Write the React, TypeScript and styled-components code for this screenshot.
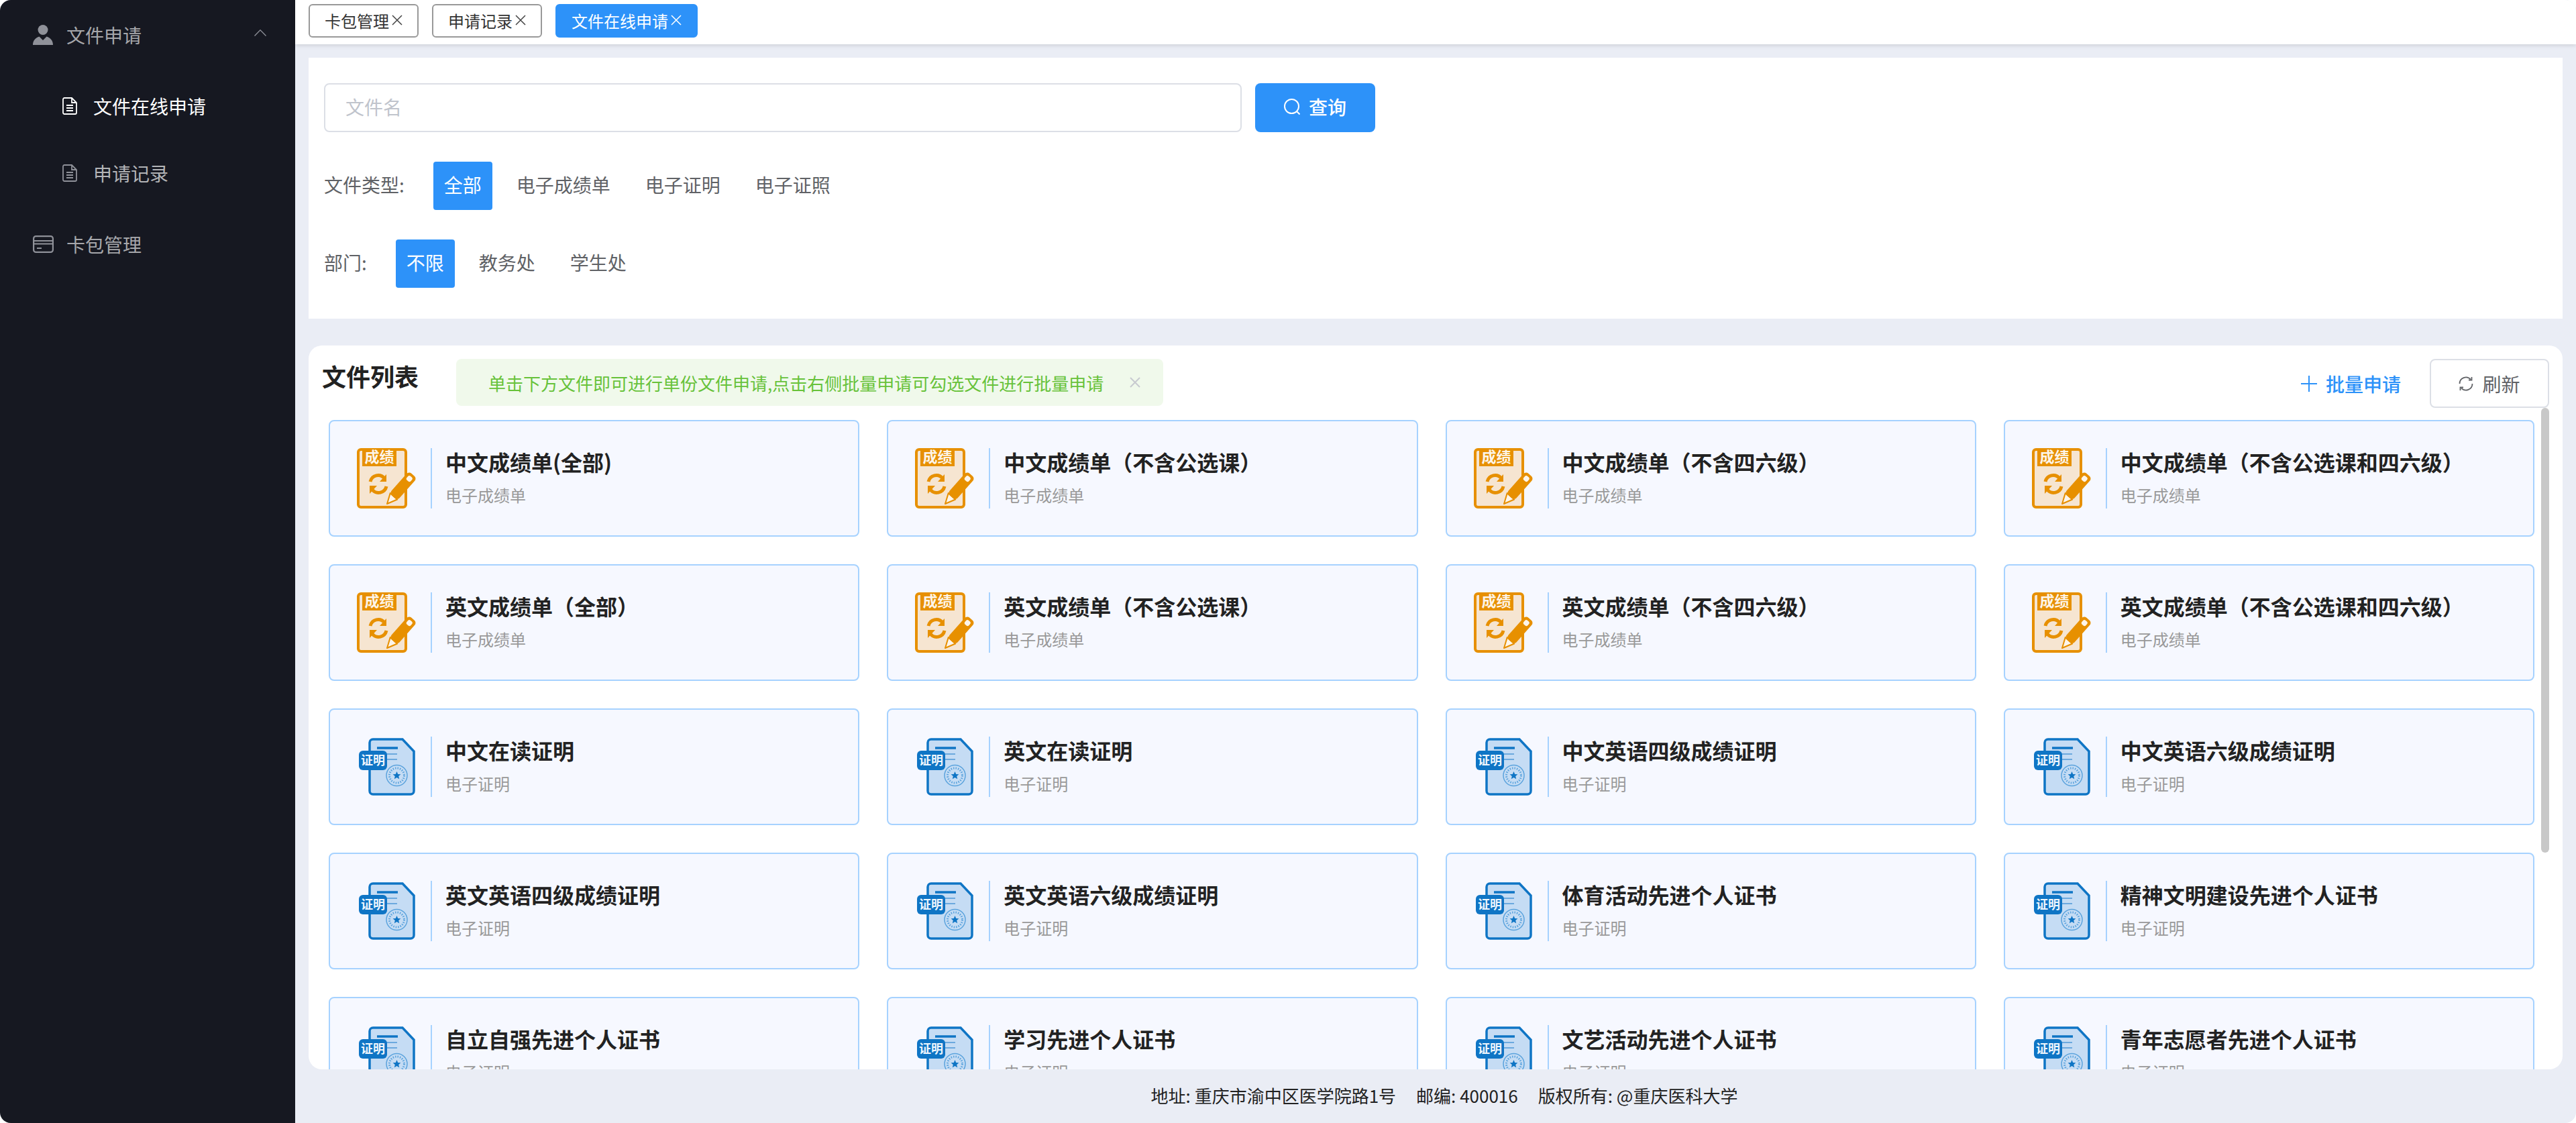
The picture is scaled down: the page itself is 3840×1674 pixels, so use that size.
import React, { FC } from "react";
import styled, { createGlobalStyle } from "styled-components";

const BLUE = "#2d92f9";

const GlobalStyle = createGlobalStyle`
  html, body {
    margin: 0;
    padding: 0;
    background: #fff;
  }
  * {
    box-sizing: border-box;
  }
  body {
    font-family: "Noto Sans CJK SC", "Noto Sans", sans-serif;
  }
`;

interface FileItem {
  title: string;
  kind: "score" | "cert";
}

const toItems = (kind: FileItem["kind"], titles: string[]): FileItem[] =>
  titles.map((title) => ({ title, kind }));

const files: FileItem[] = [
  ...toItems("score", [
    "中文成绩单(全部)",
    "中文成绩单（不含公选课）",
    "中文成绩单（不含四六级）",
    "中文成绩单（不含公选课和四六级）",
    "英文成绩单（全部）",
    "英文成绩单（不含公选课）",
    "英文成绩单（不含四六级）",
    "英文成绩单（不含公选课和四六级）",
  ]),
  ...toItems("cert", [
    "中文在读证明",
    "英文在读证明",
    "中文英语四级成绩证明",
    "中文英语六级成绩证明",
    "英文英语四级成绩证明",
    "英文英语六级成绩证明",
    "体育活动先进个人证书",
    "精神文明建设先进个人证书",
    "自立自强先进个人证书",
    "学习先进个人证书",
    "文艺活动先进个人证书",
    "青年志愿者先进个人证书",
  ]),
];

const ScoreIcon: FC = () => (
  <IconSvg width="90" height="90" viewBox="0 0 90 90" fill="none">
    <rect x="2" y="2" width="71" height="86" rx="4" fill="#f6e5d1" stroke="#e79000" strokeWidth="4" />
    <path d="M8 0H59V27H8Z" fill="#e79000" />
    <text x="33.5" y="21" textAnchor="middle" fontSize="22" fontWeight="700" fill="#fdf5ea">
      成绩
    </text>
    <path d="M20 50a12 12 0 0 1 21-5" stroke="#e79000" strokeWidth="5" />
    <path d="M44 39v11H34Z" fill="#e79000" />
    <path d="M44 57a12 12 0 0 1-21 5" stroke="#e79000" strokeWidth="5" />
    <path d="M19 68V56h11Z" fill="#e79000" />
    <g transform="translate(45 83) rotate(41.7)">
      <path d="M0 0L-7-15H7Z" fill="#fdf5ea" stroke="#e79000" strokeWidth="2" strokeLinejoin="round" />
      <rect x="-8" y="-58" width="16" height="44" rx="5" fill="#e79000" />
      <rect x="-4" y="-54" width="8" height="8" rx="3" fill="#fdf5ea" />
    </g>
  </IconSvg>
);

const CertIcon: FC = () => (
  <IconSvg width="90" height="90" viewBox="0 0 90 90" fill="none">
    <path
      d="M24 4H68L85 22V81a5 5 0 0 1-5 5H24a5 5 0 0 1-5-5V9a5 5 0 0 1 5-5Z"
      fill="#c5dcf4"
      stroke="#0f75c5"
      strokeWidth="3.5"
    />
    <path d="M30 17H61" stroke="#0f75c5" strokeWidth="3.5" />
    <path d="M30 26H60M30 34H60" stroke="#4f98d6" strokeWidth="1.5" />
    <circle cx="59.5" cy="58" r="15.5" stroke="#5ba3dd" strokeWidth="1.5" />
    <circle cx="59.5" cy="58" r="11" stroke="#5ba3dd" strokeWidth="3" strokeDasharray="1.5 2" />
    <path
      d="M59.5 52l1.7 3.9 4.2.4-3.2 2.8 1 4.1-3.7-2.2-3.7 2.2 1-4.1-3.2-2.8 4.2-.4Z"
      fill="#0f75c5"
    />
    <rect x="3" y="21" width="42" height="29" rx="6" fill="#0f75c5" />
    <text x="24" y="42" textAnchor="middle" fontSize="18" fontWeight="700" fill="#eef6fd">
      证明
    </text>
  </IconSvg>
);

const UserIcon: FC = () => (
  <svg width="30" height="30" viewBox="0 0 30 30" fill="#8f9199">
    <circle cx="15" cy="7.5" r="7.5" />
    <path d="M0 30C0 23 4 19.5 9.5 17.5L15 23L20.500 17.500C26 19.500 30 23 30 30Z" />
  </svg>
);

const DocIcon: FC<{ color: string }> = ({ color }) => (
  <svg width="22" height="26" viewBox="0 0 22 26" fill="none" stroke={color} strokeWidth="1.8">
    <path d="M3 1H14L21 8V23a2 2 0 0 1-2 2H3a2 2 0 0 1-2-2V3a2 2 0 0 1 2-2Z" />
    <path d="M14 1V8H21" />
    <path d="M6 12H16M6 16H16M6 20H16" />
  </svg>
);

const WalletIcon: FC = () => (
  <svg width="31" height="26" viewBox="0 0 31 26" fill="none" stroke="#8f9199" strokeWidth="2.2">
    <rect x="1.100" y="1.100" width="28.800" height="23.800" rx="3.500" />
    <path d="M1 8H30M1 12.500H30M6 19H13" />
  </svg>
);

const SearchIcon: FC = () => (
  <svg width="24" height="24" viewBox="0 0 24 24" fill="none" stroke="#fff" strokeWidth="2">
    <circle cx="11.500" cy="11.500" r="10.500" />
    <path d="M19 19L23.500 23.500" />
  </svg>
);

const CrossIcon: FC<{ color: string; weight?: number }> = ({ color, weight = 1.5 }) => (
  <svg width="16" height="16" viewBox="0 0 16 16" fill="none" stroke={color} strokeWidth={weight}>
    <path d="M1 1L15 15M15 1L1 15" />
  </svg>
);

const PlusIcon: FC = () => (
  <svg width="24" height="24" viewBox="0 0 24 24" fill="none" stroke={BLUE} strokeWidth="2">
    <path d="M0 12H24M12 0V24" />
  </svg>
);

const RefreshIcon: FC = () => (
  <svg width="22" height="22" viewBox="0 0 22 22" fill="none" stroke="#606266" strokeWidth="1.800">
    <path d="M1.500 11A9.500 9.500 0 0 1 18 4.500" />
    <path d="M20.500 11A9.500 9.500 0 0 1 4 17.500" />
    <path d="M15 5.500H19.500V1" />
    <path d="M7 16.500H2.500V21" />
  </svg>
);

const ChevronIcon: FC = () => (
  <svg width="18" height="10" viewBox="0 0 18 10" fill="none" stroke="#8f9199" strokeWidth="1.300">
    <path d="M0.500 9.500L9 0.800L17.500 9.500" />
  </svg>
);

const FileCardItem: FC<{ item: FileItem }> = ({ item }) => (
  <FileCard>
    <IconBox>{item.kind === "score" ? <ScoreIcon /> : <CertIcon />}</IconBox>
    <FileText>
      <FileTitle>{item.title}</FileTitle>
      <FileSub>{item.kind === "score" ? "电子成绩单" : "电子证明"}</FileSub>
    </FileText>
  </FileCard>
);

const App: FC = () => {
  return (
    <Shell>
      <GlobalStyle />
      <Sidebar>
        <MenuRow>
          <MenuIcon>
            <UserIcon />
          </MenuIcon>
          文件申请
          <MenuArrow>
            <ChevronIcon />
          </MenuArrow>
        </MenuRow>
        <SubMenu>
          <SubRow $active>
            <DocIcon color="#fff" />
            文件在线申请
          </SubRow>
          <SubRow>
            <DocIcon color="#8f9199" />
            申请记录
          </SubRow>
        </SubMenu>
        <MenuRow>
          <MenuIcon>
            <WalletIcon />
          </MenuIcon>
          卡包管理
        </MenuRow>
      </Sidebar>

      <Column>
        <TabBar>
          <Tab>
            卡包管理
            <CrossIcon color="#444" />
          </Tab>
          <Tab>
            申请记录
            <CrossIcon color="#444" />
          </Tab>
          <Tab $active>
            文件在线申请
            <CrossIcon color="#fff" />
          </Tab>
        </TabBar>

        <Main>
          <SearchCard>
            <SearchRow>
              <SearchInput placeholder="文件名" />
              <SearchButton>
                <SearchIcon />
                查询
              </SearchButton>
            </SearchRow>
            <FilterRow>
              <FilterLabel>文件类型:</FilterLabel>
              <FilterOption $active>全部</FilterOption>
              <FilterOption>电子成绩单</FilterOption>
              <FilterOption>电子证明</FilterOption>
              <FilterOption>电子证照</FilterOption>
            </FilterRow>
            <FilterRow>
              <FilterLabel>部门:</FilterLabel>
              <FilterOption $active>不限</FilterOption>
              <FilterOption>教务处</FilterOption>
              <FilterOption>学生处</FilterOption>
            </FilterRow>
          </SearchCard>

          <ListPanel>
            <ListHeader>
              <ListTitle>文件列表</ListTitle>
              <Notice>
                单击下方文件即可进行单份文件申请,点击右侧批量申请可勾选文件进行批量申请
                <NoticeClose>
                  <CrossIcon color="#c8cad0" weight={2} />
                </NoticeClose>
              </Notice>
              <Actions>
                <BatchButton>
                  <PlusIcon />
                  批量申请
                </BatchButton>
                <RefreshButton>
                  <RefreshIcon />
                  刷新
                </RefreshButton>
              </Actions>
            </ListHeader>
            <ListBody>
              <ScrollArea>
                <FileGrid>
                  {files.map((item) => (
                    <FileCardItem key={item.title} item={item} />
                  ))}
                </FileGrid>
              </ScrollArea>
              <ScrollThumb />
            </ListBody>
          </ListPanel>
        </Main>

        <Footer>
          <span>地址: 重庆市渝中区医学院路1号</span>
          <span>邮编: 400016</span>
          <span>版权所有: @重庆医科大学</span>
        </Footer>
      </Column>
    </Shell>
  );
};

const IconSvg = styled.svg`
  display: block;
  overflow: visible;
`;

const Shell = styled.div`
  display: flex;
  width: 100vw;
  height: 100vh;
  overflow: hidden;
  border-radius: 16px;
  background: #eaedf5;
`;

const Sidebar = styled.aside`
  flex: 0 0 440px;
  padding-top: 2px;
  background: #161821;
`;

const MenuRow = styled.div`
  display: flex;
  align-items: center;
  height: 100px;
  padding-left: 49px;
  padding-right: 43px;
  font-size: 28px;
  color: #a6a7ab;
`;

const MenuIcon = styled.span`
  display: flex;
  width: 50px;
`;

const MenuArrow = styled.span`
  display: flex;
  margin-left: auto;
  margin-top: -6px;
`;

const SubMenu = styled.div`
  padding: 6px 0;
`;

const SubRow = styled.div<{ $active?: boolean }>`
  display: flex;
  align-items: center;
  gap: 24px;
  height: 100px;
  padding-left: 93px;
  font-size: 28px;
  color: ${(p) => (p.$active ? "#fff" : "#b3b4b7")};
`;

const Column = styled.div`
  flex: 1;
  min-width: 0;
  display: flex;
  flex-direction: column;
`;

const TabBar = styled.div`
  flex: 0 0 66px;
  position: relative;
  display: flex;
  gap: 20px;
  padding: 6px 20px 0;
  background: #fff;
  box-shadow: 0 2px 6px rgba(0, 0, 0, 0.12);
`;

const Tab = styled.div<{ $active?: boolean }>`
  display: flex;
  align-items: center;
  gap: 4px;
  height: 50px;
  padding: 0 22px 2px;
  font-size: 24px;
  border-radius: 6px;
  border: 2px solid ${(p) => (p.$active ? BLUE : "#999")};
  background: ${(p) => (p.$active ? BLUE : "#fff")};
  color: ${(p) => (p.$active ? "#fff" : "#333")};
`;

const Main = styled.main`
  flex: 1;
  min-height: 0;
  display: flex;
  flex-direction: column;
  gap: 40px;
  padding: 20px 20px 0;
`;

const SearchCard = styled.section`
  flex: 0 0 389px;
  display: flex;
  flex-direction: column;
  gap: 44px;
  padding: 38px 23px 0;
  background: #fff;
`;

const SearchRow = styled.div`
  display: flex;
  gap: 20px;
`;

const SearchInput = styled.input`
  width: 1368px;
  height: 73px;
  padding: 0 30px 4px;
  font-family: inherit;
  font-size: 28px;
  outline: none;
  border: 2px solid #dcdfe6;
  border-radius: 8px;

  &::placeholder {
    color: #c0c4cc;
  }
`;

const SearchButton = styled.button`
  display: flex;
  align-items: center;
  justify-content: center;
  gap: 13px;
  width: 179px;
  height: 73px;
  padding: 0 0 3px;
  font-family: inherit;
  font-size: 28px;
  font-weight: 500;
  color: #fff;
  border: 0;
  border-radius: 8px;
  background: ${BLUE};
`;

const FilterRow = styled.div`
  display: flex;
  align-items: center;
  gap: 20px;
  height: 72px;
  font-size: 28px;
  color: #606266;
`;

const FilterLabel = styled.span`
  margin-right: 23px;
  padding-bottom: 4px;
`;

const FilterOption = styled.span<{ $active?: boolean }>`
  display: flex;
  align-items: center;
  height: 72px;
  padding: 0 16px 4px;
  border-radius: 4px;
  background: ${(p) => (p.$active ? BLUE : "transparent")};
  color: ${(p) => (p.$active ? "#fff" : "#606266")};
`;

const ListPanel = styled.section`
  flex: 1;
  min-height: 0;
  display: flex;
  flex-direction: column;
  padding: 20px 20px 0;
  border-radius: 20px;
  overflow: hidden;
  background: #fff;
`;

const ListHeader = styled.div`
  flex: 0 0 72px;
  display: flex;
  align-items: flex-start;
`;

const ListTitle = styled.h2`
  width: 200px;
  margin: 0;
  font-size: 36px;
  line-height: 50px;
  font-weight: 700;
  color: #222;
`;

const Notice = styled.div`
  display: flex;
  align-items: center;
  width: 1054px;
  height: 70px;
  padding: 0 34px 0 48px;
  font-size: 26px;
  color: #67c23a;
  border-radius: 8px;
  background: #f0f9eb;
`;

const NoticeClose = styled.span`
  display: flex;
  margin-left: auto;
`;

const Actions = styled.div`
  display: flex;
  align-items: center;
  gap: 43px;
  margin-left: auto;
`;

const BatchButton = styled.div`
  display: flex;
  align-items: center;
  gap: 13px;
  font-size: 28px;
  font-weight: 500;
  color: ${BLUE};
`;

const RefreshButton = styled.div`
  display: flex;
  align-items: center;
  justify-content: center;
  gap: 13px;
  width: 178px;
  height: 73px;
  font-size: 28px;
  color: #606266;
  border: 2px solid #dcdfe6;
  border-radius: 8px;
  background: #fff;
`;

const ListBody = styled.div`
  flex: 1;
  min-height: 0;
  position: relative;
`;

const ScrollArea = styled.div`
  height: 100%;
  overflow-y: auto;
  padding: 18px 22px 0 10px;
`;

/* the headless browser hides native scrollbars, so the thumb is drawn over the list */
const ScrollThumb = styled.div`
  position: absolute;
  top: 0;
  right: 0;
  width: 12px;
  height: 663px;
  border-radius: 6px;
  background: #c8c8c8;
`;

const FileGrid = styled.div`
  display: grid;
  grid-template-columns: repeat(4, 1fr);
  grid-auto-rows: 174px;
  gap: 41px;
`;

const FileCard = styled.div`
  display: flex;
  align-items: center;
  padding-left: 40px;
  border: 2px solid #a6d2ff;
  border-radius: 8px;
  background: #f6f8ff;
`;

const IconBox = styled.div`
  flex: none;
  width: 90px;
  height: 90px;
`;

const FileText = styled.div`
  height: 90px;
  margin-left: 20px;
  padding-left: 20px;
  border-left: 2px solid #a6d2ff;
`;

const FileTitle = styled.div`
  margin-top: -2px;
  font-size: 32px;
  line-height: 44px;
  font-weight: 600;
  color: #222;
`;

const FileSub = styled.div`
  margin-top: 11px;
  font-size: 24px;
  line-height: 34px;
  color: #999;
`;

const Footer = styled.footer`
  flex: 0 0 80px;
  display: flex;
  align-items: center;
  justify-content: center;
  gap: 30px;
  padding: 0 0 3px 26px;
  font-size: 26px;
  color: #222;
`;

export default App;
